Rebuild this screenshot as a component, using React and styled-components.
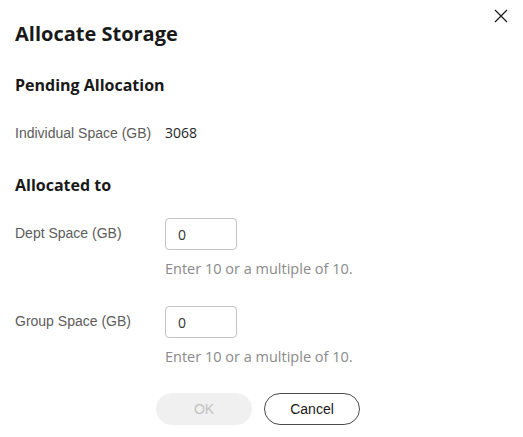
import React from 'react';
import styled, { createGlobalStyle } from 'styled-components';

const GlobalStyle = createGlobalStyle`
  html, body {
    margin: 0;
    padding: 0;
    background: #ffffff;
  }
  * {
    box-sizing: border-box;
  }
`;

// Dialog shell
const Dialog = styled.div`
  position: relative;
  width: 515px;
  padding: 20px 15px 0 15px;
  font-family: "Liberation Sans", Arial, sans-serif;
  color: #191919;
`;

const CloseButton = styled.button`
  position: absolute;
  top: 9px;
  right: 7px;
  width: 14px;
  height: 14px;
  padding: 0;
  border: none;
  background: transparent;
  cursor: pointer;
  display: flex;
`;

const Title = styled.h1`
  margin: 0;
  font-family: "Open Sans", "Noto Sans", sans-serif;
  font-size: 20px;
  line-height: 28px;
  font-weight: 700;
`;

const SectionTitle = styled.h2`
  margin: ${props => props.$top}px 0 0 0;
  font-family: "Open Sans", "Noto Sans", sans-serif;
  font-size: 16px;
  line-height: 22px;
  font-weight: 700;
`;

// Label / value rows
const Row = styled.div`
  display: grid;
  grid-template-columns: 150px 1fr;
  align-items: start;
  margin-top: ${props => props.$top}px;
`;

const Label = styled.div`
  font-size: 14px;
  line-height: 20px;
  color: #5c5c5c;
  padding-top: ${props => props.$pad || 0}px;
`;

const Value = styled.div`
  font-family: "Open Sans", "Noto Sans", sans-serif;
  font-size: 14px;
  line-height: 20px;
  color: #252525;
`;

const Field = styled.div`
  display: flex;
  flex-direction: column;
`;

const Input = styled.input`
  width: 72px;
  height: 32px;
  padding: 0 12px;
  border: 1px solid #c4c4c4;
  border-radius: 4px;
  font-family: "Open Sans", "Noto Sans", sans-serif;
  font-size: 14px;
  color: #333333;
  outline: none;
`;

const Hint = styled.div`
  margin-top: 9px;
  font-family: "Open Sans", "Noto Sans", sans-serif;
  font-size: 14.5px;
  line-height: 20px;
  color: #8a8a8a;
`;

// Footer buttons
const Footer = styled.div`
  display: flex;
  justify-content: center;
  gap: 12px;
  margin-top: 26px;
  padding-left: 1px;
`;

const Button = styled.button`
  width: 96px;
  height: 32px;
  border-radius: 16px;
  font-family: "Liberation Sans", Arial, sans-serif;
  font-size: 14px;
  cursor: pointer;
  background: ${props => (props.$disabled ? '#f0f0f0' : '#ffffff')};
  color: ${props => (props.$disabled ? '#c2c2c2' : '#191919')};
  border: 1px solid ${props => (props.$disabled ? '#f0f0f0' : '#4a4a4a')};
`;

const App = () => {
  return (
    <>
      <GlobalStyle />
      <Dialog>
        <CloseButton aria-label="Close">
          <svg width="14" height="14" viewBox="0 0 14 14">
            <path d="M1 1 L13 13 M13 1 L1 13" stroke="#191919" strokeWidth="1.2" fill="none" />
          </svg>
        </CloseButton>

        <Title>Allocate Storage</Title>

        <SectionTitle $top={26}>Pending Allocation</SectionTitle>
        <Row $top={27}>
          <Label>Individual Space (GB)</Label>
          <Value>3068</Value>
        </Row>

        <SectionTitle $top={31}>Allocated to</SectionTitle>
        <Row $top={22}>
          <Label $pad={5}>Dept Space (GB)</Label>
          <Field>
            <Input defaultValue="0" />
            <Hint>Enter 10 or a multiple of 10.</Hint>
          </Field>
        </Row>
        <Row $top={27}>
          <Label $pad={5}>Group Space (GB)</Label>
          <Field>
            <Input defaultValue="0" />
            <Hint>Enter 10 or a multiple of 10.</Hint>
          </Field>
        </Row>

        <Footer>
          <Button $disabled disabled>OK</Button>
          <Button>Cancel</Button>
        </Footer>
      </Dialog>
    </>
  );
};

export default App;
